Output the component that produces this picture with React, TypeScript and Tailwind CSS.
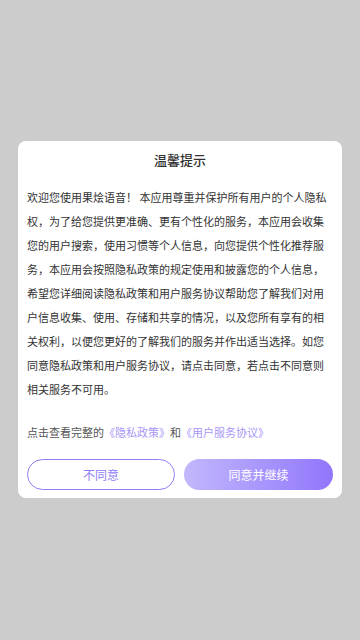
const cjk = { fontFamily: '"Noto Sans CJK SC", "Noto Sans", sans-serif' };

export default function App() {
  return (
    <div
      className="flex h-[640px] w-[360px] items-start justify-center bg-[#cccccc] pt-[141px]"
      style={cjk}
    >
      <div className="w-[324px] rounded-[8px] bg-white px-[9px] pb-[8px] pt-[9px]">
        <h2 className="text-center text-[13px] font-medium leading-[20px] text-[#333333]">
          温馨提示
        </h2>
        <p className="mt-[15px] text-[11px] leading-[24px] text-[#333333]">
          欢迎您使用果烩语音！ 本应用尊重并保护所有用户的个人隐私权，为了给您提供更准确、更有个性化的服务，本应用会收集您的用户搜索，使用习惯等个人信息，向您提供个性化推荐服务，本应用会按照隐私政策的规定使用和披露您的个人信息，希望您详细阅读隐私政策和用户服务协议帮助您了解我们对用户信息收集、使用、存储和共享的情况，以及您所有享有的相关权利，以便您更好的了解我们的服务并作出适当选择。如您同意隐私政策和用户服务协议，请点击同意，若点击不同意则相关服务不可用。
        </p>
        <p className="mt-[19px] text-[11px] leading-[24px] text-[#555555]">
          点击查看完整的
          <span className="text-[#a996f7]">《隐私政策》</span>和
          <span className="text-[#a996f7]">《用户服务协议》</span>
        </p>
        <div className="mt-[15px] flex gap-[9px]">
          <button className="h-[31px] w-[148px] rounded-full border border-[#8f7ef7] bg-white text-[12px] text-[#8f7ef7]">
            不同意
          </button>
          <button className="h-[31px] w-[149px] rounded-full bg-gradient-to-r from-[#c3b7fc] to-[#9275fb] text-[12px] text-white">
            同意并继续
          </button>
        </div>
      </div>
    </div>
  );
}
